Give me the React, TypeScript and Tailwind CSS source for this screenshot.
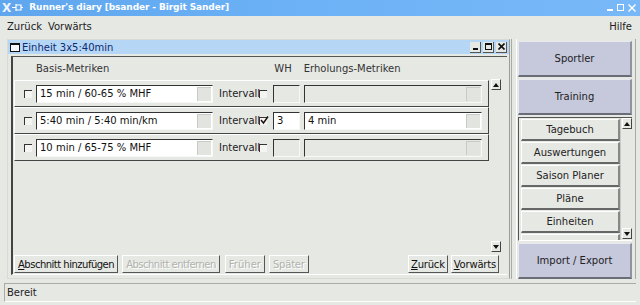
import { ReactNode } from 'react';

type RowProps = {
  basis: string;
  checked: boolean;
  wh: string;
  erholung: string;
  enabled: boolean;
};

const rows: RowProps[] = [
  { basis: '15 min / 60-65 % MHF', checked: false, wh: '', erholung: '', enabled: false },
  { basis: '5:40 min / 5:40 min/km', checked: true, wh: '3', erholung: '4 min', enabled: true },
  { basis: '10 min / 65-75 % MHF', checked: false, wh: '', erholung: '', enabled: false },
];

function CheckBox({ checked }: { checked: boolean }) {
  return (
    <div className="w-[8px] h-[8px] border-t border-l border-[#333] bg-[#f4f4f2] relative">
      {checked && (
        <svg className="absolute -top-[2px] left-0" width="9" height="9" viewBox="0 0 9 9">
          <path d="M1 4 L3.5 7 L8 0.5" stroke="#111" strokeWidth="1.4" fill="none" />
        </svg>
      )}
    </div>
  );
}

function Field({ value, enabled, width }: { value: string; enabled: boolean; width: string }) {
  return (
    <div
      className={`${width} h-[18px] flex border-t border-l border-[#333] border-b border-r border-b-[#f8f8f8] border-r-[#f8f8f8] ${
        enabled ? 'bg-white' : 'bg-[#e6e8e4]'
      }`}
    >
      <div className="flex-1 pl-[3px] leading-[16px] text-[#111]">{value}</div>
      <div className="w-[14px] my-[1px] mr-[1px] bg-[#e2e4e0] border-l border-t border-[#c8cac6]" />
    </div>
  );
}

function SmallField({ value, enabled }: { value: string; enabled: boolean }) {
  return (
    <div
      className={`w-[27px] h-[18px] border-t border-l border-[#333] border-b border-r border-b-[#f8f8f8] border-r-[#f8f8f8] pl-[3px] leading-[16px] ${
        enabled ? 'bg-white' : 'bg-[#e6e8e4]'
      }`}
    >
      {value}
    </div>
  );
}

function Row({ basis, checked, wh, erholung, enabled }: RowProps) {
  return (
    <div className="h-[27px] flex items-center border-t border-l border-white border-b border-r border-b-[#444] border-r-[#444]">
      <div className="w-[21px] flex justify-end pr-[4px]">
        <CheckBox checked={false} />
      </div>
      <Field value={basis} enabled width="w-[177px]" />
      <span className="ml-[6px] w-[40px] text-[#222]">Intervall</span>
      <CheckBox checked={checked} />
      <div className="ml-[6px]">
        <SmallField value={wh} enabled={enabled} />
      </div>
      <div className="ml-[4px]">
        <Field value={erholung} enabled={enabled} width="w-[178px]" />
      </div>
    </div>
  );
}

function Btn({ children, disabled, className }: { children: ReactNode; disabled?: boolean; className?: string }) {
  return (
    <div
      className={`h-[18px] flex items-center border-t border-l border-white border-b border-r border-b-[#555] border-r-[#555] bg-[#e6e8e4] ${
        disabled ? 'text-[#b0b2ae] [text-shadow:1px_1px_0_#fff]' : 'text-[#111]'
      } ${className ?? 'px-[3px]'}`}
    >
      {children}
    </div>
  );
}

function ScrollArrow({ up }: { up: boolean }) {
  return (
    <div className="w-[10px] h-[11px] shrink-0 bg-[#e6e8e4] border-t border-l border-white border-b border-r border-b-[#444] border-r-[#444] flex items-center justify-center">
      <svg width="6" height="4" viewBox="0 0 6 4">
        {up ? <path d="M0 4 L3 0 L6 4 Z" fill="#111" /> : <path d="M0 0 L3 4 L6 0 Z" fill="#111" />}
      </svg>
    </div>
  );
}

function NavButton({ label, big }: { label: string; big?: boolean }) {
  return big ? (
    <div className="h-[36px] shrink-0 flex items-center justify-center bg-[#c6c8dc] border-t border-l border-[#e8e8f0] border-b-2 border-r-2 border-b-[#6a6c78] border-r-[#9092a0] text-[#222]">
      {label}
    </div>
  ) : (
    <div className="h-[22px] shrink-0 flex items-center justify-center bg-[#e6e8e4] border-t border-l border-white border-b-2 border-r-2 border-b-[#666] border-r-[#888] text-[#222]">
      {label}
    </div>
  );
}

export default function App() {
  return (
    <div className="w-[640px] h-[305px] bg-[#e6e8e4] flex flex-col font-['DejaVu_Sans',sans-serif] text-[10px] text-[#111] overflow-hidden">
      {/* title bar */}
      <div className="h-[16px] flex items-center bg-gradient-to-r from-[#5fa6ee] via-[#6db2f6] to-[#78b8f8] text-white">
        <span className="ml-[2px] font-bold text-[#f0f4ff] text-[12px] leading-none">X</span>
        <svg className="ml-[1px]" width="12" height="9" viewBox="0 0 12 9">
          <path d="M0 4.5 H4 M4 1 V8 M4 2 H9 V7 H4 M9 4.5 H11" stroke="#fff" strokeWidth="1.2" fill="none" />
        </svg>
        <span className="ml-[5px] font-bold text-[9px] tracking-[-0.1px]">Runner's diary [bsander - Birgit Sander]</span>
        <div className="ml-auto mr-[4px] flex items-center gap-[4px]">
          <span className="w-[6px] h-[2px] bg-white mt-[5px]" />
          <span className="w-[7px] h-[7px] border border-white" />
          <svg width="8" height="8" viewBox="0 0 8 8">
            <path d="M0.5 0.5 L7.5 7.5 M7.5 0.5 L0.5 7.5" stroke="#fff" strokeWidth="1.4" />
          </svg>
        </div>
      </div>

      {/* menu bar */}
      <div className="h-[21px] flex items-center px-[7px] text-[#222]">
        <span>Zurück</span>
        <span className="ml-[6px]">Vorwärts</span>
        <span className="ml-auto mr-[1px]">Hilfe</span>
      </div>

      {/* main */}
      <div className="flex-1 flex pt-[3px] pb-[4px]">
        {/* left: internal frame */}
        <div className="ml-[7px] w-[503px] flex flex-col border border-[#d8dad6] border-r-[#9a9c98]">
          <div className="h-[14px] flex items-center bg-[#b6d6f6] text-[#0b2a70]">
            <div className="ml-[2px] w-[10px] h-[9px] border border-[#111] border-t-2 bg-[#f4f6fa]" />
            <span className="ml-[2px]">Einheit 3x5:40min</span>
            <div className="ml-auto mr-[2px] flex items-center gap-[2px]">
              <div className="w-[11px] h-[11px] bg-[#e6e8e4] border-b border-r border-[#555] flex items-end justify-center pb-[2px]">
                <span className="w-[5px] h-[2px] bg-[#111]" />
              </div>
              <div className="w-[11px] h-[11px] bg-[#e6e8e4] border-b border-r border-[#555] flex items-center justify-center">
                <span className="w-[7px] h-[7px] border border-[#111] border-t-2" />
              </div>
              <div className="w-[11px] h-[11px] bg-[#e6e8e4] border-b border-r border-[#555] flex items-center justify-center">
                <svg width="7" height="7" viewBox="0 0 7 7">
                  <path d="M0.5 0.5 L6.5 6.5 M6.5 0.5 L0.5 6.5" stroke="#111" strokeWidth="1.6" />
                </svg>
              </div>
            </div>
          </div>
          <div className="flex-1 flex flex-col pl-[3px] pr-[2px] pt-[2px] pb-[3px]">
            <div className="flex-1 flex flex-col border-t border-l-2 border-[#555] border-l-[#444] border-b border-b-white pl-[1px] pr-[6px]">
              <div className="flex-1 flex">
                <div className="flex-1 flex flex-col pr-[2px]">
                  <div className="h-[23px] flex items-center text-[#333]">
                    <span className="ml-[22px]">Basis-Metriken</span>
                    <span className="ml-[165px]">WH</span>
                    <span className="ml-[12px]">Erholungs-Metriken</span>
                  </div>
                  {rows.map((r) => (
                    <Row key={r.basis} {...r} />
                  ))}
                </div>
                <div className="w-[10px] flex flex-col justify-between pt-[22px] pb-[1px]">
                  <ScrollArrow up />
                  <ScrollArrow up={false} />
                </div>
              </div>
              <div className="h-[21px] pt-[2px] flex items-start text-[10px]">
                <Btn className="px-[3px] tracking-[-0.5px]">
                  <span>
                    <span className="underline">A</span>bschnitt hinzufügen
                  </span>
                </Btn>
                <Btn disabled className="ml-[4px] px-[3px] tracking-[-0.5px]">
                  Abschnitt entfernen
                </Btn>
                <Btn disabled className="ml-[5px] px-[3px]">
                  Früher
                </Btn>
                <Btn disabled className="ml-[4px] px-[3px] tracking-[-0.2px]">
                  Später
                </Btn>
                <Btn className="ml-auto px-[2px] tracking-[-0.2px]">
                  <span>
                    <span className="underline">Z</span>urück
                  </span>
                </Btn>
                <Btn className="ml-[3px] mr-[2px] px-[2px] tracking-[-0.2px]">
                  <span>
                    <span className="underline">V</span>orwärts
                  </span>
                </Btn>
              </div>
            </div>
          </div>
        </div>

        {/* separator */}
        <div className="w-[6px] ml-[1px] border-l border-[#a8aaa6] border-r border-r-white" />

        {/* right panel */}
        <div className="w-[114px] ml-[1px] flex flex-col gap-[2px] pt-[2px]">
          <NavButton label="Sportler" big />
          <NavButton label="Training" big />
          <div className="h-[124px] flex border-t border-l border-[#555] border-b border-b-white">
            <div className="flex-1 flex flex-col gap-[1px] pl-[2px] pt-[1px] overflow-hidden">
              <NavButton label="Tagebuch" />
              <NavButton label="Auswertungen" />
              <NavButton label="Saison Planer" />
              <NavButton label="Pläne" />
              <NavButton label="Einheiten" />
              <NavButton label="" />
            </div>
            <div className="w-[12px] flex flex-col justify-between border-l border-[#c8cac6] pl-[1px] pb-[1px]">
              <ScrollArrow up />
              <ScrollArrow up={false} />
            </div>
          </div>
          <NavButton label="Import / Export" big />
        </div>
        <div className="w-[4px] ml-[3px] border-l border-[#a8aaa6]" />
      </div>

      {/* status bar */}
      <div className="h-[19px] mx-[4px] mb-[3px] flex items-center border-t border-l border-[#a8aaa6] border-b border-b-white pl-[2px] text-[#222]">
        Bereit
      </div>
    </div>
  );
}
